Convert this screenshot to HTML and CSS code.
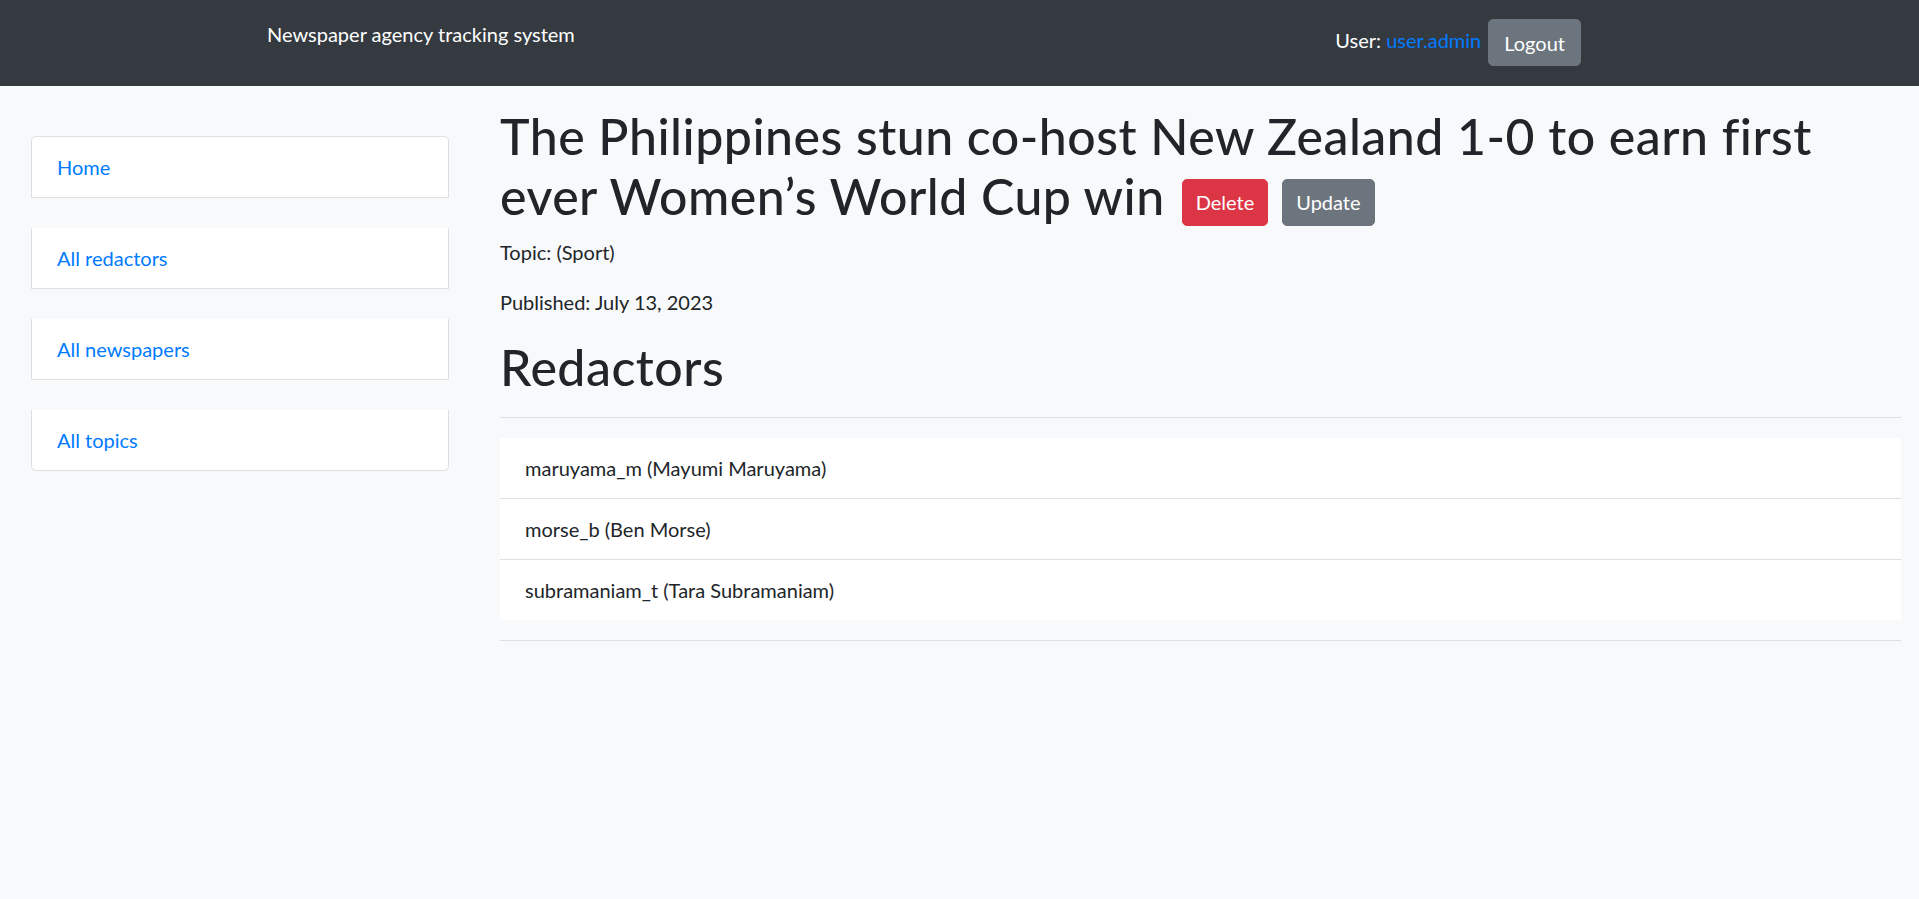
FILE: index.html
```html
<!DOCTYPE html>
<html lang="en">
<head>
<meta charset="utf-8">
<title>Newspaper agency tracking system</title>
<link rel="stylesheet" href="styles.css">
</head>
<body>
<nav class="navbar">
  <div class="brand">Newspaper agency tracking system</div>
  <div class="user-box">
    <span class="user-label">User: <a class="link" href="#">user.admin</a></span>
    <a class="btn btn-secondary btn-logout" href="#">Logout</a>
  </div>
</nav>
<div class="layout">
  <aside class="sidebar">
    <ul class="side-list">
      <li class="side-item first"><a class="link" href="#">Home</a></li>
      <li class="side-item"><a class="link" href="#">All redactors</a></li>
      <li class="side-item"><a class="link" href="#">All newspapers</a></li>
      <li class="side-item last"><a class="link" href="#">All topics</a></li>
    </ul>
  </aside>
  <main class="content">
    <h1 class="title"><span class="title-part">The Philippines stun co-host New Zealand 1-0 to earn first</span> <span class="title-part">ever Women’s World Cup win</span><a class="btn btn-danger btn-delete" href="#">Delete</a><a class="btn btn-secondary btn-update" href="#">Update</a></h1>
    <p class="meta">Topic: (Sport)</p>
    <p class="meta">Published: July 13, 2023</p>
    <h1 class="section-title">Redactors</h1>
    <hr class="rule">
    <ul class="list-flush">
      <li class="list-item">maruyama_m (Mayumi Maruyama)</li>
      <li class="list-item">morse_b (Ben Morse)</li>
      <li class="list-item">subramaniam_t (Tara Subramaniam)</li>
    </ul>
    <hr class="rule">
  </main>
</div>
</body>
</html>
```
FILE: styles.css
```css
html, body {
  background: #f8f9fa;
}
body {
  margin: 0;
  min-height: 899px;
  font-family: Lato, "Noto Sans", sans-serif;
  font-size: 20px;
  line-height: 30px;
  color: #212529;
}
a { text-decoration: none; }
.link { color: #007bff; }

.navbar {
  height: 86px;
  background: #343a40;
  display: flex;
  align-items: flex-start;
  box-sizing: border-box;
}
.brand {
  margin-left: 267px;
  padding-top: 19px;
  color: #fff;
}
.user-box {
  margin-left: auto;
  margin-right: 338px;
  padding-top: 19px;
  display: flex;
  align-items: flex-start;
}
.user-label {
  color: #fff;
  margin-top: 6px;
  margin-right: 7px;
}

.btn {
  display: inline-block;
  font-size: 20px;
  line-height: 30px;
  font-weight: 400;
  letter-spacing: 0;
  padding: 7.5px 15px;
  border: 1.25px solid transparent;
  border-radius: 5px;
  color: #fff;
  vertical-align: middle;
}
.btn-secondary {
  background: #6c757d;
  border-color: #6c757d;
}
.btn-danger {
  background: #dc3545;
  border-color: #dc3545;
}
.btn-delete {
  margin-left: 17px;
  padding: 7.5px 13px;
}
.btn-update {
  margin-left: 14px;
  padding: 7.5px 13px;
}

.layout {
  display: flex;
  align-items: flex-start;
  padding: 0 18px 0 31px;
}
.sidebar {
  width: 418px;
  flex: none;
  margin-top: 50px;
}
.side-list {
  list-style: none;
  margin: 0;
  padding: 0;
}
.side-item {
  background: #fff;
  padding: 15px 25px;
  border: 1px solid rgba(0, 0, 0, 0.125);
  border-top-width: 0;
  margin-top: 30px;
}
.side-item.first {
  border-top-width: 1px;
  margin-top: 0;
  border-radius: 5px 5px 0 0;
}
.side-item.last {
  border-radius: 0 0 5px 5px;
}

.content {
  flex: 1;
  min-width: 0;
  margin-left: 51px;
  padding-top: 20px;
}
.title {
  font-size: 50px;
  line-height: 60px;
  font-weight: 500;
  letter-spacing: 0.5px;
  margin: 0 0 11px;
}
.meta {
  margin: 0 0 20px;
}
.section-title {
  font-size: 50px;
  line-height: 60px;
  font-weight: 500;
  letter-spacing: 0.5px;
  margin: 0;
}
.rule {
  border: 0;
  border-top: 1px solid rgba(0, 0, 0, 0.1);
  margin: 20px 0;
  height: 0;
}
.list-flush {
  list-style: none;
  margin: 0;
  padding: 0;
}
.list-item {
  background: #fff;
  padding: 15px 25px;
  border-bottom: 1px solid rgba(0, 0, 0, 0.125);
}
.list-item:last-child {
  border-bottom: 0;
}
```
